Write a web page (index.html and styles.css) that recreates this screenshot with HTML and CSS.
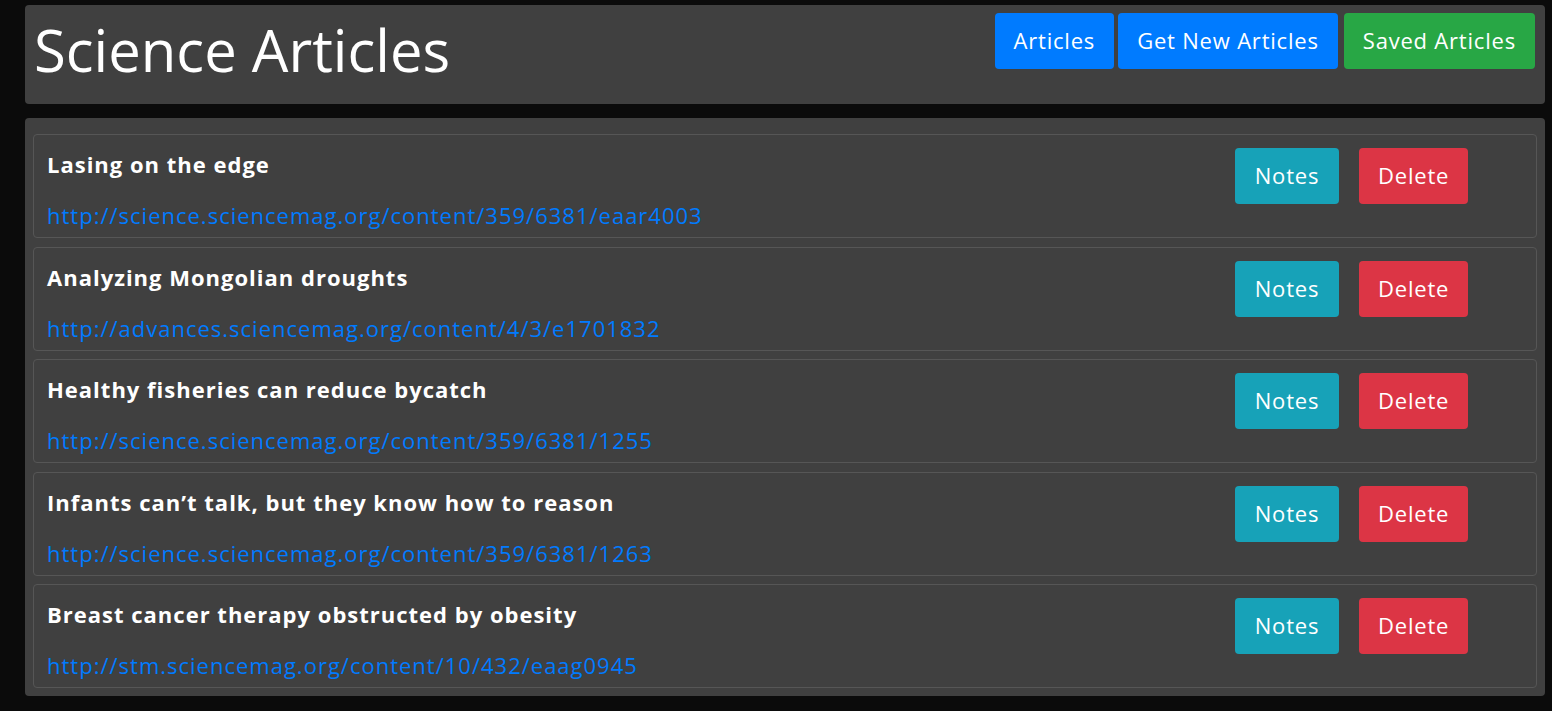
FILE: index.html
```html
<!DOCTYPE html>
<html>
<head>
<meta charset="utf-8">
<link rel="stylesheet" href="styles.css">
</head>
<body>
<header class="topbar">
  <h1 class="title">Science Articles</h1>
  <nav class="nav">
    <button class="btn btn-lg btn-blue">Articles</button>
    <button class="btn btn-lg btn-blue">Get New Articles</button>
    <button class="btn btn-lg btn-green">Saved Articles</button>
  </nav>
</header>
<main class="panel">
  <div class="card">
    <div class="info">
      <h5 class="atitle">Lasing on the edge</h5>
      <a class="link" href="#">http://science.sciencemag.org/content/359/6381/eaar4003</a>
    </div>
    <div class="actions">
      <button class="btn btn-teal">Notes</button>
      <button class="btn btn-red">Delete</button>
    </div>
  </div>
  <div class="card">
    <div class="info">
      <h5 class="atitle">Analyzing Mongolian droughts</h5>
      <a class="link" href="#">http://advances.sciencemag.org/content/4/3/e1701832</a>
    </div>
    <div class="actions">
      <button class="btn btn-teal">Notes</button>
      <button class="btn btn-red">Delete</button>
    </div>
  </div>
  <div class="card">
    <div class="info">
      <h5 class="atitle">Healthy fisheries can reduce bycatch</h5>
      <a class="link" href="#">http://science.sciencemag.org/content/359/6381/1255</a>
    </div>
    <div class="actions">
      <button class="btn btn-teal">Notes</button>
      <button class="btn btn-red">Delete</button>
    </div>
  </div>
  <div class="card">
    <div class="info">
      <h5 class="atitle">Infants can’t talk, but they know how to reason</h5>
      <a class="link" href="#">http://science.sciencemag.org/content/359/6381/1263</a>
    </div>
    <div class="actions">
      <button class="btn btn-teal">Notes</button>
      <button class="btn btn-red">Delete</button>
    </div>
  </div>
  <div class="card">
    <div class="info">
      <h5 class="atitle">Breast cancer therapy obstructed by obesity</h5>
      <a class="link" href="#">http://stm.sciencemag.org/content/10/432/eaag0945</a>
    </div>
    <div class="actions">
      <button class="btn btn-teal">Notes</button>
      <button class="btn btn-red">Delete</button>
    </div>
  </div>
</main>
</body>
</html>
```

FILE: styles.css
```css
* { box-sizing: border-box; }
html, body { margin: 0; padding: 0; }
body {
  background: #0b0b0b;
  font-family: "Open Sans", "Liberation Sans", sans-serif;
  color: #fff;
  padding: 5px 7px 14px 25px;
}
.topbar {
  background: #404040;
  border-radius: 4px;
  height: 99px;
  display: flex;
  justify-content: space-between;
  align-items: flex-start;
  padding: 8px 10px 0 9px;
}
.title {
  margin: 0;
  font-size: 58px;
  font-weight: 400;
  line-height: 74px;
}
.nav {
  display: flex;
  gap: 4px;
}
.nav .btn-green { margin-left: 2px; }
.btn {
  border: none;
  color: #fff;
  font-family: inherit;
  font-size: 22px;
  letter-spacing: 0.8px;
  border-radius: 4px;
  height: 56px;
  padding: 0 19px 2px;
  cursor: pointer;
}
.btn-blue { background: #007bff; }
.btn-green { background: #28a745; }
.btn-teal { background: #17a2b8; }
.btn-red { background: #dc3545; }
.panel {
  margin-top: 14px;
  background: #404040;
  border-radius: 4px;
  padding: 16px 8px 8px 8px;
  display: flex;
  flex-direction: column;
  gap: 8.5px;
}
.card {
  height: 104px;
  border: 1px solid #565656;
  border-radius: 4px;
  display: flex;
  justify-content: space-between;
  padding: 13px 13px 0 13px;
}
.info {
  display: flex;
  flex-direction: column;
}
.atitle {
  margin: 0;
  font-size: 22px;
  font-weight: 700;
  letter-spacing: 1px;
  line-height: 33px;
}
.link {
  margin-top: 21px;
  color: #007bff;
  text-decoration: none;
  font-size: 22px;
  letter-spacing: 1px;
  line-height: 26px;
}
.actions {
  display: flex;
  gap: 20px;
  width: 288px;
}
.actions .btn-teal { width: 104px; }
.actions .btn-red { width: 109px; }
```
